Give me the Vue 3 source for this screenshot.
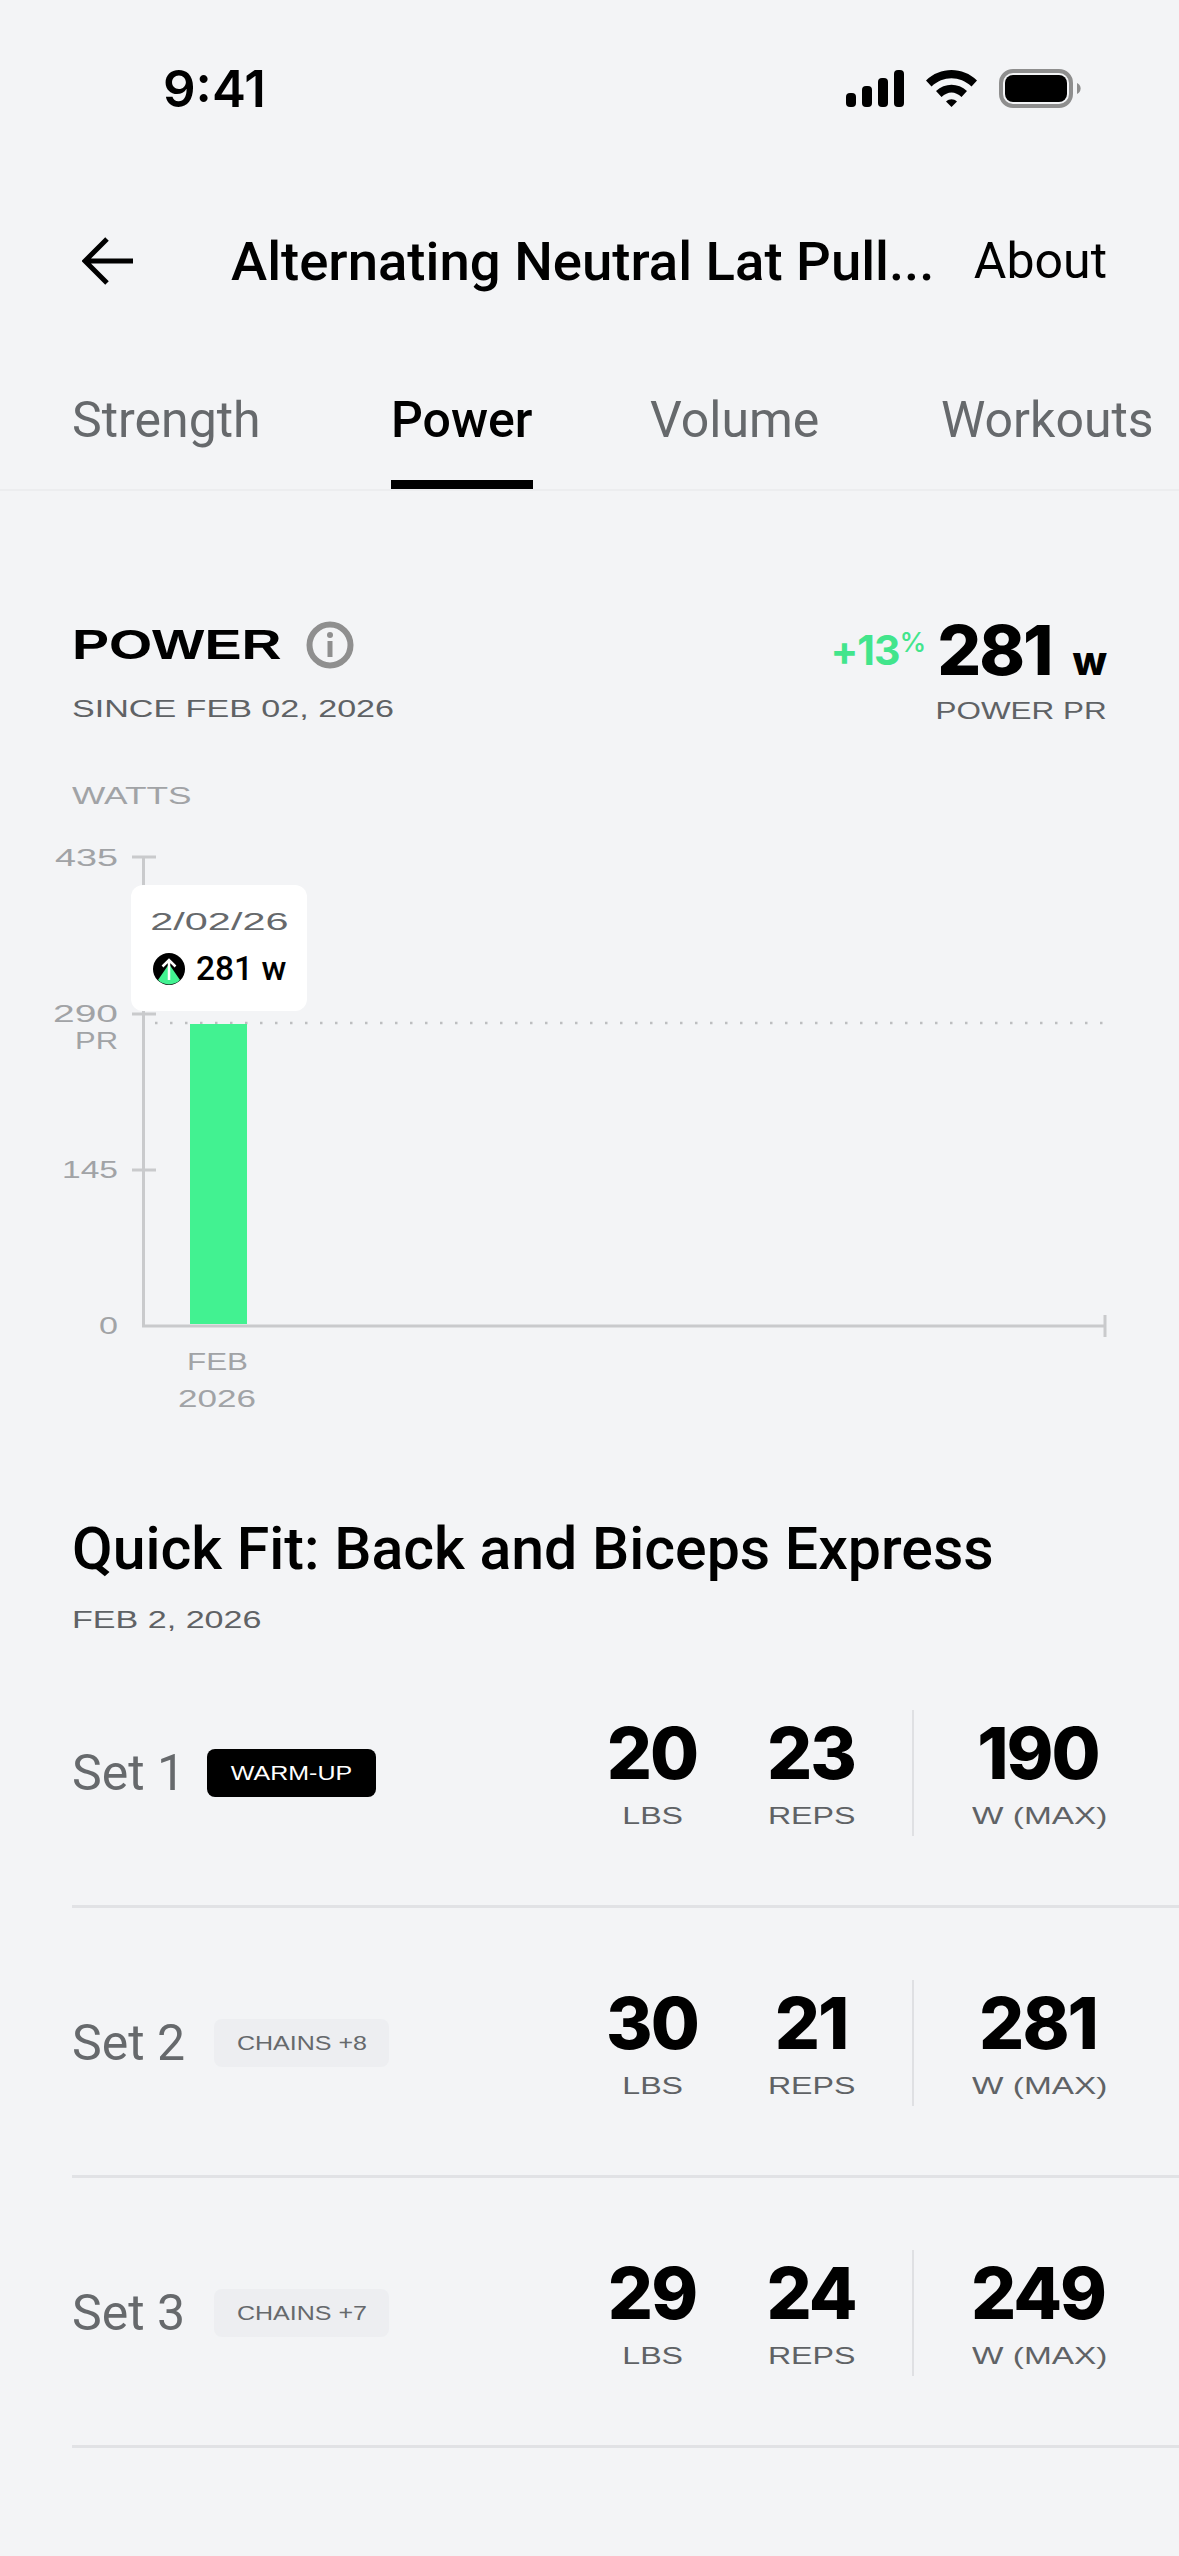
<template>
  <div class="screen">
    <!-- status bar -->
    <div class="status">
      <span class="time">9:41</span>
      <div class="status-icons">
        <svg width="58" height="37" viewBox="0 0 58 37">
          <rect x="0" y="23" width="10" height="14" rx="4" />
          <rect x="16" y="16" width="10" height="21" rx="4" />
          <rect x="32" y="8" width="10" height="29" rx="4" />
          <rect x="48" y="0" width="10" height="37" rx="4" />
        </svg>
        <svg width="51" height="37" viewBox="0 0 51 37">
          <path d="M0 10.5C14-3.5 37-3.5 51 10.5L45.5 16.5C34 5.5 17 5.500 5.500 16.5Z" />
          <path d="M10 21C19 12.500 32 12.500 41 21L35.500 27C29 21 22 21 15.500 27Z" />
          <path d="M20 31.500C23.500 28.500 27.500 28.500 31 31.500L25.500 37Z" />
        </svg>
        <svg width="82" height="39" viewBox="0 0 82 39">
          <rect x="2" y="2" width="70" height="35" rx="12" fill="none" stroke="#8e8e8e" stroke-width="4" />
          <rect x="6" y="6" width="62" height="27" rx="8" />
          <path d="M78 14a6 6 0 0 1 0 11Z" fill="#8e8e8e" />
        </svg>
      </div>
    </div>

    <!-- nav -->
    <div class="nav">
      <svg class="back" width="52" height="48" viewBox="0 0 52 48" fill="none" stroke="#000" stroke-width="5">
        <path d="M51 24H4M25 2L3 24L25 46" />
      </svg>
      <span class="nav-title">Alternating Neutral Lat Pull...</span>
      <span class="nav-about">About</span>
    </div>

    <!-- tabs -->
    <div class="tabs">
      <div v-for="tab in tabs" :key="tab" class="tab" :class="{ active: tab === 'Power' }">
        <span>{{ tab }}</span>
      </div>
    </div>

    <!-- power summary -->
    <div class="summary">
      <div>
        <div class="summary-title">
          <span class="power-word">POWER</span>
          <svg class="info" width="48" height="48" viewBox="0 0 48 48">
            <circle cx="24" cy="24" r="20.500" fill="none" stroke="#8f8f8f" stroke-width="6" />
            <circle cx="24" cy="14" r="3" fill="#8f8f8f" />
            <rect x="21.500" y="20" width="5" height="16" fill="#8f8f8f" />
          </svg>
        </div>
        <div class="since"><span class="wide-left">SINCE FEB 02, 2026</span></div>
      </div>
      <div class="pr">
        <div class="pr-value">
          <span class="pr-pct">+13<sup>%</sup></span>
          <span class="pr-num">281</span>
          <span class="pr-unit">w</span>
        </div>
        <div class="pr-label"><span class="wide-right">POWER PR</span></div>
      </div>
    </div>

    <div class="watts"><span class="wide-left">WATTS</span></div>

    <!-- chart -->
    <div class="chart">
      <svg width="1179" height="610" viewBox="0 810 1179 610">
        <path d="M143.500 857V1326H1105" fill="none" stroke="#c9cacc" stroke-width="3" />
        <path d="M132 857H156M132 1014H156M132 1170H156M1105 1315V1337" stroke="#c9cacc" stroke-width="3" />
        <path d="M155 1023H1105" stroke="#bdbec0" stroke-width="2.500" stroke-dasharray="2.500 12.500" />
        <rect x="190" y="1024" width="57" height="300" fill="#42f291" />
        <text
          v-for="label in chartLabels"
          :key="label.text"
          class="axis-label"
          :x="label.x"
          :y="label.y"
          :textLength="label.w"
          lengthAdjust="spacingAndGlyphs"
        >{{ label.text }}</text>
      </svg>
      <div class="tooltip">
        <div class="tooltip-date"><span>2/02/26</span></div>
        <div class="tooltip-value">
          <svg width="32" height="32" viewBox="0 0 32 32">
            <circle cx="16" cy="16" r="16" fill="#000" />
            <path d="M16 11L27 27A16 16 0 0 1 5 27Z" fill="#42f291" />
            <path d="M16 27V7M9.500 13.500L16 7L22.500 13.500" fill="none" stroke="#fff" stroke-width="2.500" />
          </svg>
          <span>281 w</span>
        </div>
      </div>
    </div>

    <!-- workout -->
    <h2 class="workout-title">Quick Fit: Back and Biceps Express</h2>
    <div class="workout-date"><span class="wide-left">FEB 2, 2026</span></div>

    <div v-for="set in sets" :key="set.name" class="set-row">
      <span class="set-name">{{ set.name }}</span>
      <span class="badge" :class="{ dark: set.dark }"><span>{{ set.badge }}</span></span>
      <div class="stats">
        <div class="stat">
          <div class="stat-num">{{ set.lbs }}</div>
          <div class="stat-label"><span>LBS</span></div>
        </div>
        <div class="stat">
          <div class="stat-num">{{ set.reps }}</div>
          <div class="stat-label"><span>REPS</span></div>
        </div>
        <div class="stat-divider"></div>
        <div class="stat stat-max">
          <div class="stat-num">{{ set.watts }}</div>
          <div class="stat-label"><span>W (MAX)</span></div>
        </div>
      </div>
    </div>
  </div>
</template>

<script setup>
const tabs = ['Strength', 'Power', 'Volume', 'Workouts']

const chartLabels = [
  { text: '435', x: 55, y: 866, w: 63 },
  { text: '290', x: 53, y: 1022, w: 65 },
  { text: 'PR', x: 75, y: 1049, w: 43 },
  { text: '145', x: 62, y: 1178, w: 56 },
  { text: '0', x: 99, y: 1334, w: 19 },
  { text: 'FEB', x: 187, y: 1370, w: 61 },
  { text: '2026', x: 178, y: 1407, w: 78 }
]

const sets = [
  { name: 'Set 1', badge: 'WARM-UP', dark: true, lbs: 20, reps: 23, watts: 190 },
  { name: 'Set 2', badge: 'CHAINS +8', dark: false, lbs: 30, reps: 21, watts: 281 },
  { name: 'Set 3', badge: 'CHAINS +7', dark: false, lbs: 29, reps: 24, watts: 249 }
]
</script>

<style>
html,
body {
  margin: 0;
  background: #f3f4f6;
}
</style>

<style scoped>
.screen {
  width: 1179px;
  height: 2556px;
  overflow: hidden;
  background: #f3f4f6;
  color: #000;
  font-family: "Liberation Sans", Arial, sans-serif;
}

.status {
  height: 176px;
  padding: 0 98px 0 163px;
  box-sizing: border-box;
  display: flex;
  align-items: center;
  justify-content: space-between;
}

.time {
  font-family: Inter, sans-serif;
  font-size: 51px;
  font-weight: 600;
}

.status-icons {
  display: flex;
  align-items: center;
  gap: 22px;
}

.nav {
  height: 170px;
  padding: 0 72px 0 82px;
  box-sizing: border-box;
  display: flex;
  align-items: center;
}

.nav-title {
  margin-left: 97px;
  font-family: Roboto, sans-serif;
  font-size: 54.500px;
  font-weight: 500;
  white-space: nowrap;
}

.nav-about {
  margin-left: auto;
  font-family: Roboto, sans-serif;
  font-size: 50px;
}

.tabs {
  display: grid;
  grid-template-columns: 319px 259px 291px auto;
  padding-left: 72px;
  border-bottom: 2px solid #ecedef;
}

.tab {
  padding-top: 44px;
  font-family: Roboto, sans-serif;
  font-size: 50px;
  line-height: 60px;
  color: #66696c;
  white-space: nowrap;
}

.tab span {
  display: inline-block;
  padding-bottom: 30px;
  border-bottom: 9px solid transparent;
}

.tab.active {
  color: #000;
  font-weight: 500;
}

.tab.active span {
  border-bottom-color: #000;
}

.summary {
  padding: 124px 72px 0;
  display: flex;
  justify-content: space-between;
}

.summary-title {
  height: 60px;
  display: flex;
  align-items: center;
}

.power-word {
  display: inline-block;
  font-size: 42px;
  font-weight: 700;
  transform: scaleX(1.32);
  transform-origin: left center;
  width: 234px;
}

.since,
.pr-label,
.workout-date,
.watts {
  font-size: 24px;
  line-height: 40px;
  color: #5f6265;
}

.since {
  margin-top: 14px;
}

.wide-left,
.wide-right {
  display: inline-block;
  white-space: nowrap;
  transform: scaleX(1.42);
  transform-origin: left center;
}

.wide-right {
  transform: scaleX(1.31);
  transform-origin: right center;
}

.pr {
  display: flex;
  flex-direction: column;
  align-items: flex-end;
}

.pr-value {
  height: 70px;
  display: flex;
  align-items: baseline;
  line-height: 70px;
}

.pr-pct {
  align-self: flex-start;
  font-family: Inter, sans-serif;
  font-size: 41px;
  font-weight: 700;
  color: #42e58c;
  letter-spacing: -1px;
}

.pr-pct sup {
  font-size: 27px;
  font-weight: 500;
  vertical-align: 13px;
  line-height: 0;
}

.pr-num {
  margin-left: 12px;
  font-family: Inter, sans-serif;
  font-size: 69px;
  font-weight: 800;
  letter-spacing: -2px;
}

.pr-unit {
  margin-left: 21px;
  font-family: Inter, sans-serif;
  font-size: 40px;
  font-weight: 800;
}

.pr-label {
  margin-top: 6px;
}

.watts {
  margin-top: 50px;
  padding-left: 72px;
  line-height: 29px;
  color: #a1a3a6;
}

.watts .wide-left {
  transform: scaleX(1.47);
}

.chart {
  position: relative;
  height: 610px;
}

.chart svg {
  display: block;
}

.axis-label {
  font-family: "Liberation Sans", Arial, sans-serif;
  font-size: 24px;
  fill: #a1a3a6;
}

.tooltip {
  position: absolute;
  left: 131px;
  top: 75px;
  width: 176px;
  height: 126px;
  box-sizing: border-box;
  padding-top: 22px;
  background: #fff;
  border-radius: 12px;
}

.tooltip-date {
  font-size: 23px;
  line-height: 30px;
  color: #66696c;
  text-align: center;
}

.tooltip-date span {
  display: inline-block;
  transform: scaleX(1.8);
}

.tooltip-value {
  margin-top: 12px;
  padding-left: 22px;
  display: flex;
  align-items: center;
  gap: 11px;
  font-family: Roboto, sans-serif;
  font-size: 33.500px;
  font-weight: 500;
}

.workout-title {
  margin: 94px 0 0;
  padding-left: 72px;
  font-family: Roboto, sans-serif;
  font-size: 59px;
  font-weight: 500;
  line-height: 70px;
  white-space: nowrap;
}

.workout-date {
  margin-top: 18px;
  padding-left: 72px;
  line-height: 36px;
}

.set-row {
  height: 270px;
  margin-left: 72px;
  padding: 3px 72px 0 0;
  box-sizing: border-box;
  border-bottom: 3px solid #e1e2e5;
  display: flex;
  align-items: center;
}

.set-name {
  font-family: Roboto, sans-serif;
  font-size: 50px;
  color: #66696c;
  white-space: nowrap;
}

.badge {
  margin-left: 29px;
  width: 175px;
  height: 48px;
  display: inline-flex;
  align-items: center;
  justify-content: center;
  border-radius: 8px;
  font-size: 20px;
  color: #66696c;
  background: #edeef1;
}

.badge span {
  display: inline-block;
  white-space: nowrap;
  transform: scaleX(1.25);
}

.badge.dark {
  margin-left: 22px;
  width: 169px;
  color: #fff;
  background: #000;
}

.stats {
  margin-left: auto;
  display: flex;
}

.stat {
  width: 159px;
  text-align: center;
}

.stat-max {
  width: 135px;
  margin-left: 58px;
}

.stat-num {
  margin-left: -3px;
  font-family: Inter, sans-serif;
  font-size: 71px;
  font-weight: 800;
  line-height: 86px;
  letter-spacing: -2px;
}

.stat-label {
  margin-left: -2px;
  font-size: 24px;
  line-height: 40px;
  color: #5f6265;
  white-space: nowrap;
}

.stat-label span {
  display: inline-block;
  transform: scaleX(1.34);
}

.stat-max .stat-label {
  margin-left: 0;
}

.stat-max .stat-label span {
  transform: scaleX(1.39);
}

.stat-divider {
  width: 2px;
  height: 126px;
  margin-left: 20px;
  background: #dfe0e3;
}
</style>
